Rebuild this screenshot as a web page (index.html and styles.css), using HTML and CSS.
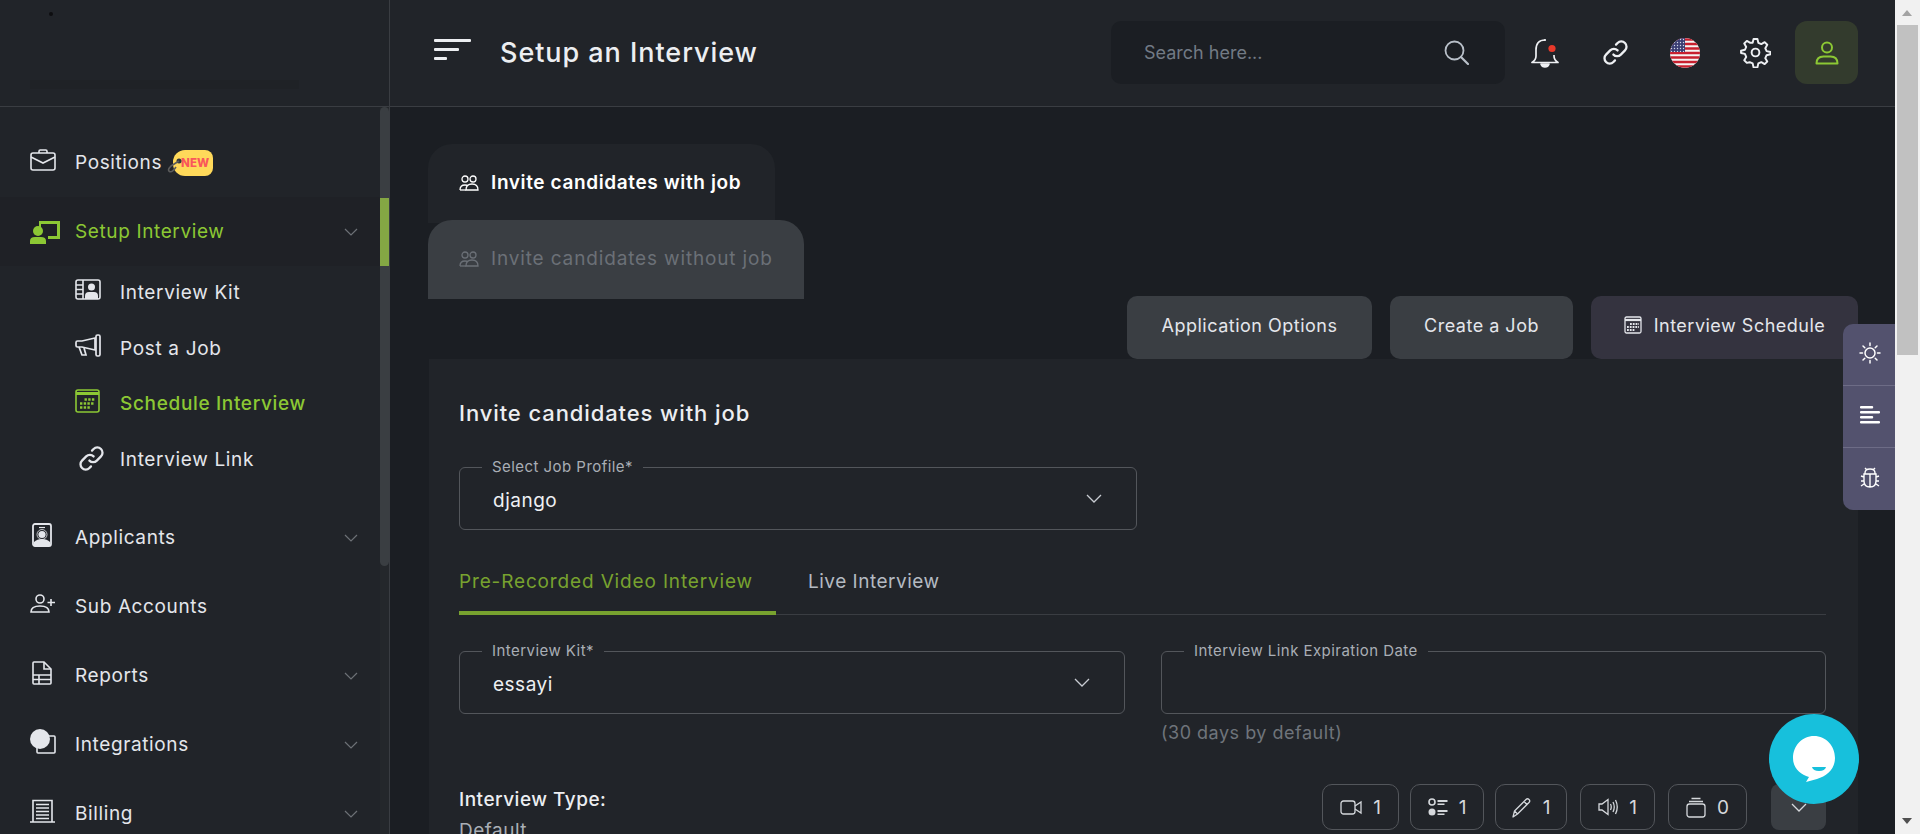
FILE: index.html
```html
<!DOCTYPE html>
<html>
<head>
<meta http-equiv="Content-Type" content="text/html; charset=utf-8"/>
<title>Setup an Interview</title>
<link rel="stylesheet" href="styles.css">
</head>
<body>
<div class="page">

  <aside class="sidebar">
    <div class="logo"><span class="logo-dot"></span><span class="logo-bar"></span></div>
    <div class="side-body">
      <nav class="nav">
        <a class="nav-row">
          <svg width="26" height="22" viewBox="0 0 26 22" fill="none" stroke="currentColor" stroke-width="1.6"><rect x="1" y="4" width="24" height="17" rx="2"/><path d="M9 4V2.2Q9 1 10.2 1h5.6Q17 1 17 2.2V4M1 8l12 6 12-6"/></svg>
          <span>Positions</span>
          <span class="new-tag"><svg width="18" height="17" viewBox="0 0 18 17" fill="none"><circle cx="12" cy="5" r="2.500" fill="#33363a"/><path d="M12 5 4 10Q0 14 2.500 15.500T9 11" stroke="#5c5c5c" stroke-width="1.600"/></svg><b>NEW</b></span>
        </a>
        <a class="nav-row active">
          <svg width="31" height="24" viewBox="0 0 31 24" fill="currentColor"><path d="M9 1h21v18H18v-3h9V4H11v3H9z"/><circle cx="8" cy="11" r="5"/><path d="M0 24v-3q0-4 5-4h6q5 0 5 4v3z"/><path d="M18 16h6v3h-6z"/></svg>
          <span>Setup Interview</span>
          <svg class="chev" width="14" height="8" viewBox="0 0 14 8" fill="none" stroke="currentColor" stroke-width="1.2"><path d="M1 1l6 6 6-6"/></svg>
        </a>
        <div class="subnav">
          <a class="sub-row">
            <svg width="26" height="21" viewBox="0 0 26 21" fill="none" stroke="currentColor" stroke-width="1.6"><rect x="1" y="1" width="24" height="19" rx="2"/><path d="M8 1v19M1 6h7M1 10.500h7M1 15h7"/><circle cx="16.500" cy="8" r="3.500" fill="currentColor" stroke="none"/><path d="M10 20v-3q0-4 4-4h5q4 0 4 4v3z" fill="currentColor" stroke="none"/></svg>
            <span>Interview Kit</span>
          </a>
          <a class="sub-row">
            <svg width="26" height="23" viewBox="0 0 26 23" fill="none" stroke="currentColor" stroke-width="1.7"><path d="M20 7 7 10H2.500Q1 10 1 11.500v3Q1 16 2.500 16H7l13 3z" transform="translate(0 -3)"/><rect x="21" y="1" width="4" height="21" rx="1.500"/><path d="M4 13l3 8h4l-2-7"/></svg>
            <span>Post a Job</span>
          </a>
          <a class="sub-row current">
            <svg width="25" height="24" viewBox="0 0 25 24" fill="none" stroke="currentColor" stroke-width="1.600"><rect x="1" y="1" width="23" height="22" rx="2"/><path d="M1 4.500h23" stroke-width="3"/><path d="M9.500 10.500h10M5 14.500h14.500M5 18.500h10" stroke-width="2.400" stroke-dasharray="2.400 1.300"/></svg>
            <span>Schedule Interview</span>
          </a>
          <a class="sub-row">
            <svg class="link-shift" width="25" height="25" viewBox="0 0 24 24" fill="none" stroke="currentColor" stroke-width="2.200" stroke-linecap="round"><path d="M10 14a5 5 0 0 0 7.100 0l4-4a5 5 0 0 0-7.100-7.100l-1.500 1.500"/><path d="M14 10a5 5 0 0 0-7.100 0l-4 4a5 5 0 0 0 7.100 7.100l1.500-1.500"/></svg>
            <span>Interview Link</span>
          </a>
        </div>
        <a class="nav-row">
          <svg class="pad" width="20" height="24" viewBox="0 0 20 24"><rect x="1" y="1" width="18" height="22" rx="2" fill="none" stroke="currentColor" stroke-width="1.800"/><path d="M2 22v-3q3-3 8-3t8 3v3z" fill="currentColor"/><circle cx="10" cy="11.500" r="5" fill="none" stroke="currentColor" stroke-width=".8"/><circle cx="10" cy="11.500" r="3.600" fill="currentColor"/><path d="M7 4.500h6" stroke="currentColor" stroke-width="1.200"/></svg>
          <span>Applicants</span>
          <svg class="chev" width="14" height="8" viewBox="0 0 14 8" fill="none" stroke="currentColor" stroke-width="1.2"><path d="M1 1l6 6 6-6"/></svg>
        </a>
        <a class="nav-row">
          <svg width="26" height="19" viewBox="0 0 26 19" fill="none" stroke="currentColor" stroke-width="1.6"><circle cx="10" cy="5" r="4"/><path d="M1 18q0-6 9-6t9 6z"/><path d="M21 5v7M17.500 8.500h7.500"/></svg>
          <span>Sub Accounts</span>
        </a>
        <a class="nav-row">
          <svg class="pad" width="20" height="24" viewBox="0 0 20 24" fill="none" stroke="currentColor" stroke-width="1.600"><path d="M2 1h10l7 7v14q0 1-1 1H2q-1 0-1-1V2q0-1 1-1z"/><path d="M12 1v7h7M1 14h18M1 18.500h18M7 14v9" /></svg>
          <span>Reports</span>
          <svg class="chev" width="14" height="8" viewBox="0 0 14 8" fill="none" stroke="currentColor" stroke-width="1.2"><path d="M1 1l6 6 6-6"/></svg>
        </a>
        <a class="nav-row">
          <svg width="26" height="25" viewBox="0 0 26 25" fill="none" stroke="currentColor" stroke-width="1.600"><path d="M19 7h5q1 0 1 1v15q0 1-1 1H8q-1 0-1-1v-4"/><circle cx="10" cy="10" r="10" fill="currentColor" stroke="none"/></svg>
          <span>Integrations</span>
          <svg class="chev" width="14" height="8" viewBox="0 0 14 8" fill="none" stroke="currentColor" stroke-width="1.2"><path d="M1 1l6 6 6-6"/></svg>
        </a>
        <a class="nav-row">
          <svg width="25" height="24" viewBox="0 0 25 24" fill="none" stroke="currentColor" stroke-width="1.600"><path d="M3 23V1.500h19V23M0 23h25"/><path d="M6 5.500h13M6 9h13M6 12.500h13M6 16h13M6 19.500h13" stroke-width="1.700"/></svg>
          <span>Billing</span>
          <svg class="chev" width="14" height="8" viewBox="0 0 14 8" fill="none" stroke="currentColor" stroke-width="1.2"><path d="M1 1l6 6 6-6"/></svg>
        </a>
      </nav>
      <div class="side-scroll"><div class="side-thumb"></div><div class="side-mark"></div></div>
    </div>
  </aside>

  <div class="content">
    <header class="topbar">
      <div class="burger"><i class="b1"></i><i class="b2"></i><i class="b3"></i></div>
      <h1 class="page-title">Setup an Interview</h1>
      <div class="search">
        <span>Search here...</span>
        <svg width="25" height="25" viewBox="0 0 25 25" fill="none" stroke="#b9c0c9" stroke-width="1.800" stroke-linecap="round"><circle cx="10.500" cy="10.500" r="9"/><path d="M17 17l7 7" stroke-width="2.200"/></svg>
      </div>
      <div class="hd-icon">
        <svg width="28" height="30" viewBox="0 0 28 30" fill="none" stroke="#eef0f3" stroke-width="1.700" stroke-linejoin="round"><path d="M14 2q-9 0-9 10v6q0 4-4 6.500h26q-4-2.500-4-6.500v-1"/><path d="M14 1v2" /><path d="M10 26q1 3 4 3t4-3z" fill="#eef0f3"/><circle cx="21" cy="10.500" r="3.600" fill="#e8392a" stroke="none"/></svg>
      </div>
      <div class="hd-icon">
        <svg width="25" height="25" viewBox="0 0 24 24" fill="none" stroke="#eef0f3" stroke-width="2.200" stroke-linecap="round"><path d="M10 14a5 5 0 0 0 7.100 0l4-4a5 5 0 0 0-7.100-7.100l-1.500 1.500"/><path d="M14 10a5 5 0 0 0-7.100 0l-4 4a5 5 0 0 0 7.100 7.100l1.500-1.500"/></svg>
      </div>
      <div class="hd-icon">
        <svg width="30" height="30" viewBox="0 0 30 30"><defs><clipPath id="round"><circle cx="15" cy="15" r="15"/></clipPath><pattern id="stars" width="3" height="3" patternUnits="userSpaceOnUse"><circle cx="1.500" cy="1.500" r=".7" fill="#d5d8e8"/></pattern></defs><g clip-path="url(#round)"><rect width="30" height="30" fill="#f4f4f4"/><path d="M0 1.500h30M0 6h30M0 10.500h30M0 15h30M0 19.500h30M0 24h30M0 28.500h30" stroke="#c8202f" stroke-width="2.300"/><rect width="15" height="14" fill="#3c3f74"/><rect width="15" height="14" fill="url(#stars)"/></g></svg>
      </div>
      <div class="hd-icon">
        <svg width="31" height="31" viewBox="0 0 24 24" fill="none" stroke="#eef0f3" stroke-width="1.500" stroke-linejoin="round"><circle cx="12" cy="12" r="3"/><path d="M10.500 1.500h3l.7 3 2.300 1 2.600-1.500 2 2-1.500 2.700 1 2.200 3 .7v1.800l-3 .7-1 2.300 1.500 2.600-2 2-2.600-1.500-2.300 1-.7 3h-3l-.7-3-2.300-1L5.300 20l-2-2 1.500-2.600-1-2.300-3-.7v-1.800l3-.7 1-2.200L3.300 5l2-2L8 4.500l1.800-.1z"/></svg>
      </div>
      <div class="user-btn">
        <svg width="24" height="24" viewBox="0 0 24 24" fill="none" stroke="#8cc834" stroke-width="2"><circle cx="12" cy="6.500" r="5"/><path d="M1.500 22.500q0-7 7-7h7q7 0 7 7z" stroke-linejoin="round"/></svg>
      </div>
    </header>

    <main class="main">
      <div class="tab-stack">
        <div class="stack-tab on">
          <svg width="20" height="16" viewBox="0 0 20 16" fill="none" stroke="currentColor" stroke-width="1.300"><circle cx="6" cy="4" r="3"/><circle cx="14" cy="4" r="3"/><path d="M1 15q0-5 5-5 2 0 3 1M7 15q0-6 6-6t6 6z"/><path d="M1 15h6"/></svg>
          <span>Invite candidates with job</span>
        </div>
        <div class="stack-tab off">
          <svg width="20" height="16" viewBox="0 0 20 16" fill="none" stroke="currentColor" stroke-width="1.300"><circle cx="6" cy="4" r="3"/><circle cx="14" cy="4" r="3"/><path d="M1 15q0-5 5-5 2 0 3 1M7 15q0-6 6-6t6 6z"/><path d="M1 15h6"/></svg>
          <span>Invite candidates without job</span>
        </div>
      </div>

      <div class="actions">
        <a class="btn btn-app">Application Options</a>
        <a class="btn btn-job">Create a Job</a>
        <a class="btn btn-sched">
          <svg width="18" height="18" viewBox="0 0 18 18" fill="none" stroke="currentColor" stroke-width="1.300"><rect x="1" y="1" width="16" height="16" rx="1.500"/><path d="M1 4h16" stroke-width="2.200"/><path d="M6 8h9M3 11h12M3 14h8" stroke-width="1.800" stroke-dasharray="1.800 1"/></svg>
          Interview Schedule
        </a>
      </div>

      <section class="card">
        <h2 class="card-title">Invite candidates with job</h2>

        <div class="field job-field">
          <label>Select Job Profile*</label>
          <span>django</span>
          <svg width="16" height="9" viewBox="0 0 16 9" fill="none" stroke="#c8ccd2" stroke-width="1.300"><path d="M1 1l7 7 7-7"/></svg>
        </div>

        <div class="tabs">
          <a class="tab on">Pre-Recorded Video Interview</a>
          <a class="tab">Live Interview</a>
        </div>

        <div class="form-row">
          <div class="field">
            <label>Interview Kit*</label>
            <span>essayi</span>
            <svg width="16" height="9" viewBox="0 0 16 9" fill="none" stroke="#c8ccd2" stroke-width="1.300"><path d="M1 1l7 7 7-7"/></svg>
          </div>
          <div>
            <div class="field">
              <label>Interview Link Expiration Date</label>
            </div>
            <p class="hint">(30 days by default)</p>
          </div>
        </div>

        <div class="type-row">
          <div class="type-text">
            <h3>Interview Type:</h3>
            <p>Default</p>
          </div>
          <div class="counts">
            <div class="count w77">
              <svg width="22" height="15" viewBox="0 0 22 15" fill="none" stroke="currentColor" stroke-width="1.300"><rect x="1" y="1" width="14" height="13" rx="2.500"/><path d="M15 6l6-4v11l-6-4"/></svg>
              <span>1</span>
            </div>
            <div class="count w74">
              <svg width="20" height="18" viewBox="0 0 20 18" fill="currentColor"><circle cx="4" cy="4" r="3" fill="none" stroke="currentColor" stroke-width="1.600"/><circle cx="4" cy="14" r="3.500"/><path d="M9.500 2h10v2h-10zM9.500 5.500h7v1.500h-7zM9.500 12h10v2h-10zM9.500 15.500h7V17h-7z"/></svg>
              <span>1</span>
            </div>
            <div class="count w72">
              <svg width="20" height="21" viewBox="0 0 20 21" fill="none" stroke="currentColor" stroke-width="1.300" stroke-linejoin="round"><path d="M1 20l1.500-6L14 2.500q1.500-1.500 3 0t0 3L5.500 17zM12 4.500l3.500 3.500M2.500 14l3 3"/></svg>
              <span>1</span>
            </div>
            <div class="count w75">
              <svg width="20" height="18" viewBox="0 0 20 18" fill="none" stroke="currentColor" stroke-width="1.300"><path d="M1 6h3l6-4.500v15L4 12H1z"/><path d="M12.500 6q1.500 3 0 6M15 4q2.500 5 0 10M17.500 2q3.500 7 0 14"/></svg>
              <span>1</span>
            </div>
            <div class="count w79">
              <svg width="20" height="21" viewBox="0 0 20 21" fill="none" stroke="currentColor" stroke-width="1.300"><rect x="1" y="7" width="18" height="13" rx="2.500"/><path d="M3 4.500h14M5.500 1.500h9"/></svg>
              <span>0</span>
            </div>
            <div class="count-more">
              <svg width="16" height="9" viewBox="0 0 16 9" fill="none" stroke="#d5d8dc" stroke-width="1.300"><path d="M1 1l7 7 7-7"/></svg>
            </div>
          </div>
        </div>
      </section>
    </main>

    <div class="side-tools">
      <div class="tool">
        <svg width="22" height="22" viewBox="0 0 22 22" fill="none" stroke="#fff" stroke-width="1.500" stroke-linecap="round"><circle cx="11" cy="11" r="5"/><path d="M11 1v2.500M11 18.500V21M1 11h2.500M18.500 11H21M4 4l1.800 1.800M16.200 16.200 18 18M4 18l1.800-1.800M16.200 5.800 18 4"/></svg>
      </div>
      <div class="tool">
        <svg width="20" height="18" viewBox="0 0 20 18" fill="#fff"><path d="M1 0h11a1 1 0 0 1 0 2.500H1A1 1 0 0 1 1 0zM1 5h18a1 1 0 0 1 0 2.500H1A1 1 0 0 1 1 5zM1 10h11a1 1 0 0 1 0 2.500H1A1 1 0 0 1 1 10zM1 15h18a1 1 0 0 1 0 2.500H1A1 1 0 0 1 1 15z"/></svg>
      </div>
      <div class="tool">
        <svg width="20" height="21" viewBox="0 0 20 21" fill="none" stroke="#fff" stroke-width="1.400"><path d="M5 7V6q0-4 5-4t5 4v1zM4 7h12v7q0 6-6 6t-6-6zM10 7v13M1 9l3 1M19 9l-3 1M1 14h3M19 14h-3M1 19l3-2M19 19l-3-2M5 1l2 2M15 1l-2 2"/></svg>
      </div>
    </div>

    <div class="chat">
      <svg width="42" height="46" viewBox="0 0 42 46" fill="#fff"><path d="M21 0c12 0 21 10 21 22 0 11-8 18-18 21l-11 3 3-5C7 38 0 32 0 22 0 10 9 0 21 0z"/><path d="M19 31h14q-1 4-7 4t-7-4z" fill="#17c0dc"/></svg>
    </div>
  </div>

  <div class="scrollbar">
    <span class="arrow up"></span>
    <div class="thumb"></div>
    <span class="arrow down"></span>
  </div>
</div>
</body>
</html>
```

FILE: styles.css
```css
* {
  box-sizing: border-box;
}

html, body {
  margin: 0;
  height: 100%;
  overflow: hidden;
}

body {
  font-family: "Inter", "Noto Sans", sans-serif;
  background-color: #1b1e23;
  color: #e4e6eb;
  font-size: 17px;
}

h1, h2, h3, p {
  margin: 0;
}

svg {
  display: block;
  flex: none;
}

.page {
  display: flex;
  height: 834px;
  overflow: hidden;
}

/* sidebar */
.sidebar {
  width: 390px;
  flex: none;
  display: flex;
  flex-direction: column;
  background-color: #212429;
  border-right: 1px solid #3a3d42;
}

.logo {
  height: 107px;
  flex: none;
  padding: 12px 90px 0 30px;
  border-bottom: 1px solid #3a3d42;
}

.logo-dot {
  display: block;
  width: 4px;
  height: 4px;
  margin-left: 19px;
  border-radius: 50%;
  background-color: #0d0e10;
}

.logo-bar {
  display: block;
  height: 9px;
  margin-top: 64px;
  background-color: #1f2226;
}

.side-body {
  flex: 1;
  display: flex;
  min-height: 0;
}

.nav {
  flex: 1;
  padding-top: 21px;
}

.nav-row {
  height: 69px;
  display: grid;
  grid-template-columns: 45px auto 1fr auto;
  align-items: center;
  padding: 0 22px 0 30px;
  font-size: 19px;
  letter-spacing: .62px;
  color: #e4e6eb;
}

.nav-row > svg:first-child,
.sub-row > svg:first-child {
  margin-bottom: 6px;
}

.nav-row.active > svg:first-child {
  margin-bottom: 0;
}

.pad {
  margin-left: 2px;
}

.chev {
  grid-column: 4;
  color: #6d7176;
}

.nav-row.active {
  background-color: #1f2126;
  color: #8cc834;
}

.new-tag {
  margin-left: 5px;
  display: flex;
  align-items: center;
}

.new-tag svg {
  margin-right: -12px;
  margin-top: 3px;
  position: relative;
  z-index: 1;
}

.new-tag b {
  width: 40px;
  height: 26px;
  border-radius: 12px 8px 8px 12px;
  background-color: #ffd95a;
  color: #f9565b;
  font-size: 11.500px;
  font-weight: 800;
  letter-spacing: 0;
  line-height: 26px;
  text-align: right;
  padding-right: 4px;
}

.subnav {
  padding-bottom: 16px;
  margin-top: -1px;
}

.sub-row {
  height: 55.5px;
  display: grid;
  grid-template-columns: 45px 1fr;
  align-items: center;
  padding-left: 75px;
  font-size: 19px;
  letter-spacing: .66px;
}

.sub-row.current {
  color: #8cc834;
  font-weight: 500;
}

.sub-row > .link-shift {
  margin: 4px 0 0 4px;
}

.side-scroll {
  width: 9px;
  flex: none;
  position: relative;
  background-color: #24272b;
}

.side-thumb {
  height: 459px;
  border-radius: 5px;
  background-color: #3a3e42;
}

.side-mark {
  position: absolute;
  top: 91px;
  left: 0;
  width: 9px;
  height: 68px;
  background-color: #84a744;
}

/* top bar */
.content {
  flex: 1;
  min-width: 0;
  display: flex;
  flex-direction: column;
  position: relative;
}

.topbar {
  height: 107px;
  flex: none;
  display: flex;
  align-items: center;
  padding: 0 37px 1px 44px;
  background-color: #212429;
  border-bottom: 1px solid #3a3d42;
}

.burger {
  width: 37px;
  display: flex;
  flex-direction: column;
  gap: 6px;
  margin-top: -6px;
}

.burger i {
  display: block;
  height: 3px;
  border-radius: 1px;
  background-color: #eceef1;
}

.b1 { width: 37px; }
.b2 { width: 25px; }
.b3 { width: 13px; }

.page-title {
  margin-left: 29px;
  font-size: 27px;
  font-weight: 500;
  letter-spacing: .95px;
  color: #eceef1;
}

.search {
  margin-left: auto;
  margin-right: 5px;
  width: 394px;
  height: 63px;
  display: flex;
  align-items: center;
  justify-content: space-between;
  padding: 0 36px 0 33px;
  border-radius: 10px;
  background-color: #1b1e23;
  color: #727a85;
  font-size: 18px;
}

.hd-icon {
  width: 70px;
  display: flex;
  justify-content: center;
}

.user-btn {
  width: 63px;
  height: 63px;
  margin-left: 5px;
  display: flex;
  align-items: center;
  justify-content: center;
  border-radius: 12px;
  background-color: #333b2d;
}

/* main */
.main {
  flex: 1;
  min-height: 0;
  overflow: hidden;
  padding: 37px 37px 0 39px;
}

.tab-stack {
  display: flex;
  flex-direction: column;
  align-items: flex-start;
  margin-left: -1px;
}

.stack-tab {
  height: 79px;
  display: flex;
  align-items: flex-start;
  gap: 12px;
  padding: 27px 31px 0;
  border-radius: 24px 24px 0 0;
  font-size: 19px;
}

.stack-tab svg {
  margin-top: 4px;
}

.stack-tab.on {
  width: 347px;
  background-color: #212429;
  color: #fff;
  font-weight: 600;
  letter-spacing: .62px;
}

.stack-tab.off {
  width: 376px;
  margin-top: -3px;
  background-color: #3a3e43;
  color: #6b7077;
  letter-spacing: .85px;
}

.actions {
  display: flex;
  justify-content: flex-end;
  gap: 18px;
  margin-top: -3px;
}

.btn {
  height: 63px;
  display: flex;
  align-items: center;
  justify-content: center;
  gap: 12px;
  padding-bottom: 5px;
  border-radius: 10px;
  background-color: #3a3e43;
  color: #e4e6eb;
  font-size: 18px;
  letter-spacing: .5px;
}

.btn-app { width: 245px; }
.btn-job { width: 183px; }

.btn-sched {
  width: 267px;
  background-color: #34333f;
}

.card {
  padding: 40px 32px 0 30px;
  background-color: #212429;
  height: 500px;
}

.card-title {
  font-size: 22px;
  font-weight: 500;
  letter-spacing: .9px;
  line-height: 28px;
  color: #eceef1;
}

.field {
  position: relative;
  height: 63px;
  display: flex;
  align-items: center;
  justify-content: space-between;
  padding: 0 34px 0 33px;
  border: 1px solid #53565b;
  border-radius: 6px;
  font-size: 19px;
  letter-spacing: .5px;
  color: #eef0f3;
}

.field label {
  position: absolute;
  left: 22px;
  top: -10px;
  padding: 0 10px;
  background-color: #212429;
  color: #a9aeb5;
  font-size: 15px;
  letter-spacing: .45px;
  line-height: 18px;
}

.field > span {
  padding-top: 3px;
}

.job-field {
  width: 678px;
  margin-top: 40px;
}

.tabs {
  display: flex;
  margin-top: 29px;
  border-bottom: 1px solid #3a3d42;
}

.tab {
  height: 55px;
  padding: 9px 0 0;
  margin-left: 32px;
  font-size: 19px;
  letter-spacing: .5px;
  line-height: 27px;
  color: #b4bac2;
}

.tab.on {
  width: 317px;
  margin: 0 0 -1px;
  height: 56px;
  border-bottom: 4px solid #78a22f;
  color: #78a22f;
  letter-spacing: .85px;
}

.form-row {
  display: grid;
  grid-template-columns: 666px 665px;
  column-gap: 36px;
  margin-top: 36px;
}

.hint {
  margin-top: 8px;
  font-size: 18px;
  letter-spacing: .5px;
  color: #6f747b;
}

.type-row {
  display: flex;
  justify-content: space-between;
  margin-top: 41px;
}

.type-text {
  padding-top: 3px;
}

.type-text h3 {
  font-size: 19px;
  font-weight: 500;
  letter-spacing: .5px;
  line-height: 26px;
  color: #eceef1;
}

.type-text p {
  margin-top: 6px;
  color: #a9aeb5;
  font-size: 19px;
  letter-spacing: .5px;
}

.counts {
  display: flex;
  gap: 11px;
  margin-right: 0;
}

.count {
  height: 46px;
  display: flex;
  align-items: center;
  justify-content: center;
  gap: 11px;
  border: 1px solid #53565b;
  border-radius: 10px;
  color: #d5d8dc;
  font-size: 19px;
}

.w77 { width: 77px; }
.w74 { width: 74px; }
.w72 { width: 72px; }
.w75 { width: 75px; margin-left: 2px; }
.w79 { width: 79px; margin-left: 2px; }

.count-more {
  width: 55px;
  height: 46px;
  margin-left: 13px;
  display: flex;
  align-items: center;
  justify-content: center;
  border-radius: 8px;
  background-color: #3a3e43;
}

/* floating things */
.side-tools {
  position: absolute;
  top: 324px;
  right: 0;
  width: 52px;
  border-radius: 10px 0 0 10px;
  background-color: #53526e;
  overflow: hidden;
}

.tool {
  height: 62px;
  display: flex;
  align-items: center;
  justify-content: center;
  padding: 0 0 3px 1px;
  border-bottom: 1px solid #6d6c86;
}

.tool:last-child {
  border-bottom: none;
}

.chat {
  position: absolute;
  left: 1379px;
  top: 714px;
  width: 90px;
  height: 90px;
  display: flex;
  align-items: center;
  justify-content: center;
  border-radius: 50%;
  background-color: #17c0dc;
}

/* browser scrollbar */
.scrollbar {
  width: 25px;
  flex: none;
  position: relative;
  background-color: #f1f1f1;
}

.thumb {
  position: absolute;
  top: 25px;
  left: 2px;
  right: 2px;
  height: 330px;
  background-color: #c1c1c1;
}

.arrow {
  position: absolute;
  left: 7px;
  border-left: 5px solid transparent;
  border-right: 5px solid transparent;
}

.arrow.up {
  top: 10px;
  border-bottom: 6px solid #a3a3a3;
}

.arrow.down {
  top: 818px;
  border-top: 6px solid #505050;
}
```
